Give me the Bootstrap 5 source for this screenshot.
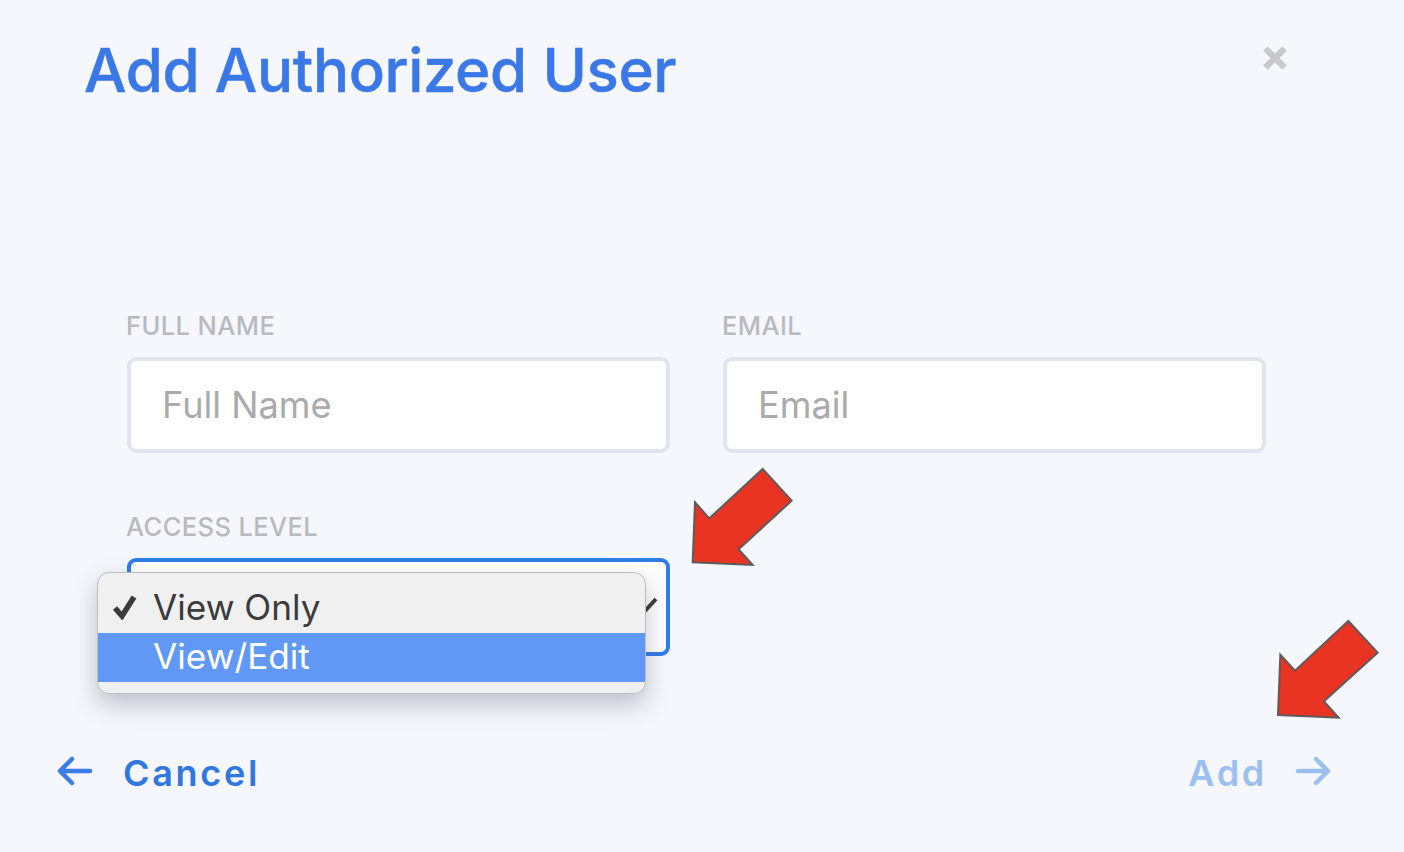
<!DOCTYPE html>
<html lang="en">
<head>
  <meta charset="UTF-8" />
  <meta name="viewport" content="width=device-width, initial-scale=1.0"/>
  <title>Add Authorized User</title>

  <link href="https://cdn.jsdelivr.net/npm/bootstrap@5.3.3/dist/css/bootstrap.min.css" rel="stylesheet"/>

  <style>
    body {
      height: 852px;
      overflow: hidden;
      background: #f5f7fd;
      font-family: Inter, "Liberation Sans", sans-serif;
    }

    .page-head {
      padding: 30px 116px 0 84px;
    }

    .page-title {
      margin: 0;
      font-size: 60px;
      font-weight: 500;
      line-height: 80px;
      letter-spacing: -0.35px;
      color: #3b78e7;
      -webkit-text-stroke: 0.5px #3b78e7;
    }

    .close-btn {
      border: none;
      background: none;
      padding: 0;
      margin-top: 15px;
      width: 26px;
      height: 26px;
      line-height: 0;
    }

    .user-form {
      margin-top: 204px;
      padding: 0 138px 0 127px;
    }

    .user-form .row {
      --bs-gutter-x: 53px;
      --bs-gutter-y: 0;
    }

    .access-row {
      margin-top: 62px;
    }

    .field-label {
      display: block;
      margin-bottom: 20px;
      margin-left: -1px;
      font-size: 25.5px;
      font-weight: 500;
      line-height: 23px;
      letter-spacing: 0.4px;
      color: #b8babf;
    }

    .field-input.form-control,
    .field-input.form-select {
      height: 96px;
      padding: 0 31px;
      border: 4px solid #dfe5ef;
      border-radius: 9px;
      background-image: none;
      font-size: 36.2px;
      color: #444;
    }

    .field-input::placeholder {
      color: #aaaaaa;
    }

    .field-input.form-select {
      height: 98px;
      border-color: #2f7de8;
      box-shadow: none;
    }

    .select-wrap {
      position: relative;
    }

    .select-chevron {
      position: absolute;
      left: 510px;
      top: 39px;
    }

    .select-menu {
      position: absolute;
      left: -30px;
      top: 14px;
      width: 549px;
      height: 122px;
      padding: 0;
      border: 1px solid #bdbdbd;
      border-radius: 12px;
      background: #f0f0f0;
      box-shadow: 0 10px 24px rgba(60, 64, 80, 0.3);
      overflow: hidden;
      font-size: 35.2px;
      color: #3b3b3b;
    }

    .select-item {
      display: flex;
      align-items: center;
      padding-left: 55px;
      line-height: 49px;
      position: relative;
    }

    .select-item.first {
      height: 60px;
      padding-top: 8px;
    }

    .select-item.picked {
      height: 49px;
      padding-bottom: 2px;
      background: #6198f5;
      color: #fff;
    }

    .select-check {
      position: absolute;
      left: 14px;
      top: 21px;
    }

    .page-foot {
      margin-top: 97px;
      padding: 0 73px 0 57px;
      font-size: 36px;
      font-weight: 600;
      line-height: 40px;
      letter-spacing: 2.7px;
    }

    .foot-link {
      color: #2f78e2;
      gap: 30px;
    }

    .foot-link svg {
      margin-top: -5px;
    }

    .foot-link.dim {
      color: #9bc0ef;
      gap: 28px;
    }

    .red-arrow {
      position: absolute;
    }

    .arrow-one {
      left: 680px;
      top: 460px;
    }

    .arrow-two {
      left: 1170px;
      top: 610px;
    }
  </style>
</head>
<body>
  <div class="page-head d-flex justify-content-between align-items-start">
    <h1 class="page-title">Add Authorized User</h1>
    <button type="button" class="close-btn" aria-label="Close">
      <svg width="26" height="26" viewBox="0 0 26 26"><path d="M3.5 3.5L22.5 22.5M22.5 3.5L3.5 22.5" stroke="#c9c9cd" stroke-width="6.5" fill="none"/></svg>
    </button>
  </div>

  <form class="user-form">
    <div class="row">
      <div class="col-6">
        <label class="field-label" for="fullName">FULL NAME</label>
        <input type="text" class="form-control field-input" id="fullName" placeholder="Full Name">
      </div>
      <div class="col-6">
        <label class="field-label" for="email">EMAIL</label>
        <input type="text" class="form-control field-input" id="email" placeholder="Email">
      </div>
    </div>

    <div class="row access-row">
      <div class="col-6">
        <label class="field-label" for="access">ACCESS LEVEL</label>
        <div class="select-wrap">
          <select class="form-select field-input" id="access">
            <option>View Only</option>
            <option>View/Edit</option>
          </select>
          <svg class="select-chevron" width="24" height="20" viewBox="0 0 24 20"><path d="M7 15L19 2" stroke="#3b3b3b" stroke-width="4" fill="none"/></svg>
          <div class="select-menu">
            <div class="select-item first">
              <svg class="select-check" width="26" height="26" viewBox="0 0 26 26"><path d="M3 14L10 22L22 3" stroke="#3b3b3b" stroke-width="5.5" fill="none"/></svg>
              View Only
            </div>
            <div class="select-item picked">View/Edit</div>
          </div>
        </div>
      </div>
    </div>
  </form>

  <div class="page-foot d-flex justify-content-between">
    <a class="foot-link d-flex align-items-center text-decoration-none" href="#">
      <svg width="36" height="32" viewBox="0 0 36 32"><path d="M33 16H4M15 4L3 16L15 28" stroke="#3b7de6" stroke-width="4.5" stroke-linecap="round" stroke-linejoin="round" fill="none"/></svg>
      Cancel
    </a>
    <a class="foot-link dim d-flex align-items-center text-decoration-none" href="#">
      Add
      <svg width="36" height="32" viewBox="0 0 36 32"><path d="M3 16H32M21 4L33 16L21 28" stroke="#9bc0ef" stroke-width="4.5" stroke-linecap="round" stroke-linejoin="round" fill="none"/></svg>
    </a>
  </div>

  <svg class="red-arrow arrow-one" width="130" height="120" viewBox="0 0 390 360"><polygon points="248,27 335,122 176,268 218,315 38,307 45,127 88,175" fill="#e93323" stroke="#5c5c5c" stroke-width="6"/></svg>
  <svg class="red-arrow arrow-two" width="220" height="200" viewBox="0 0 660 600"><polygon points="535,33 623,128 462,274 506,323 324,315 331,134 375,182" fill="#e93323" stroke="#5c5c5c" stroke-width="6"/></svg>

  <script src="https://cdn.jsdelivr.net/npm/bootstrap@5.3.3/dist/js/bootstrap.bundle.min.js"></script>
</body>
</html>
